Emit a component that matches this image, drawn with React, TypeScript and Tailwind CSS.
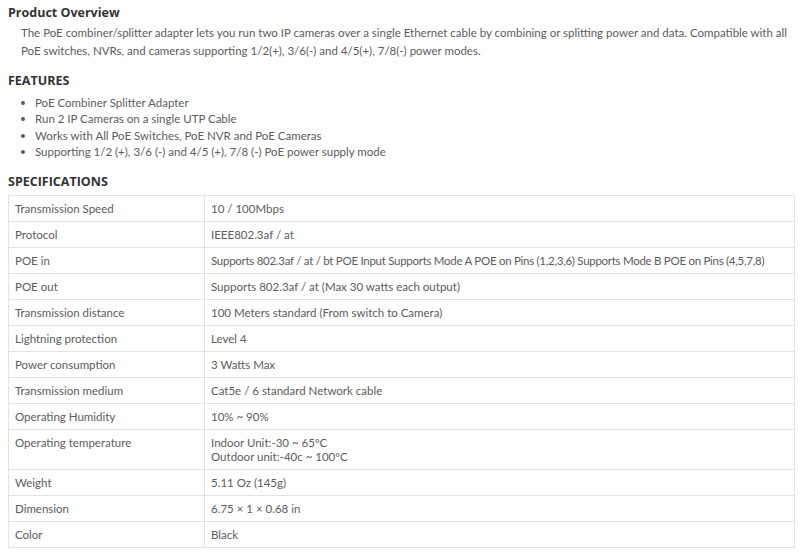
import React from 'react';

const specs: [string, string[]][] = [
  ['Transmission Speed', ['10 / 100Mbps']],
  ['Protocol', ['IEEE802.3af / at']],
  ['POE in', ['Supports 802.3af / at / bt POE Input Supports Mode A POE on Pins (1,2,3,6) Supports Mode B POE on Pins (4,5,7,8)']],
  ['POE out', ['Supports 802.3af / at (Max 30 watts each output)']],
  ['Transmission distance', ['100 Meters standard (From switch to Camera)']],
  ['Lightning protection', ['Level 4']],
  ['Power consumption', ['3 Watts Max']],
  ['Transmission medium', ['Cat5e / 6 standard Network cable']],
  ['Operating Humidity', ['10% ~ 90%']],
  ['Operating temperature', ['Indoor Unit:-30 ~ 65ºC', 'Outdoor unit:-40c ~ 100ºC']],
  ['Weight', ['5.11 Oz (145g)']],
  ['Dimension', ['6.75 × 1 × 0.68 in']],
  ['Color', ['Black']],
];

const features = [
  'PoE Combiner Splitter Adapter',
  'Run 2 IP Cameras on a single UTP Cable',
  'Works with All PoE Switches, PoE NVR and PoE Cameras',
  'Supporting 1/2 (+), 3/6 (-) and 4/5 (+), 7/8 (-) PoE power supply mode',
];

export default function App() {
  return (
    <div className="w-[800px] h-[554px] bg-white px-2 pt-[5px] text-[#5c5c5c] font-['Lato',sans-serif] text-[11.5px] overflow-hidden">
      <h2 className="font-['Open_Sans',sans-serif] text-[12.5px] font-bold text-[#333] leading-4">Product Overview</h2>
      <p className="pl-[13px] pr-1 mt-[3px] leading-[18px]">
        The PoE combiner/splitter adapter lets you run two IP cameras over a single Ethernet cable by combining or splitting power and data. Compatible with all PoE switches, NVRs, and cameras supporting 1/2(+), 3/6(-) and 4/5(+), 7/8(-) power modes.
      </p>
      <h2 className="font-['Open_Sans',sans-serif] text-[12.5px] font-bold text-[#333] leading-4 mt-[13px]">FEATURES</h2>
      <ul className="mt-[6px] leading-[16.3px]">
        {features.map((f) => (
          <li key={f} className="flex items-center">
            <span className="ml-[13px] mr-[10px] w-[4px] h-[4px] rounded-full bg-[#5c5c5c] shrink-0" />
            {f}
          </li>
        ))}
      </ul>
      <h2 className="font-['Open_Sans',sans-serif] text-[12.5px] font-bold text-[#333] leading-4 mt-[14px]">SPECIFICATIONS</h2>
      <table className="mt-[5px] w-[787px] border-collapse border border-[#e3e3e3]">
        <tbody>
          {specs.map(([k, v]) => (
            <tr key={k}>
              <td className="w-[196px] border border-[#e3e3e3] px-[6px] align-top py-[5.5px] leading-[14px]">{k}</td>
              <td
                className={
                  k === 'POE in'
                    ? 'border border-[#e3e3e3] px-[6px] align-top py-[5.5px] leading-[14px] tracking-[-0.28px] whitespace-nowrap'
                    : 'border border-[#e3e3e3] px-[6px] align-top py-[5.5px] leading-[14px] whitespace-nowrap'
                }
              >
                {v.map((line) => (
                  <div key={line}>{line}</div>
                ))}
              </td>
            </tr>
          ))}
        </tbody>
      </table>
    </div>
  );
}
